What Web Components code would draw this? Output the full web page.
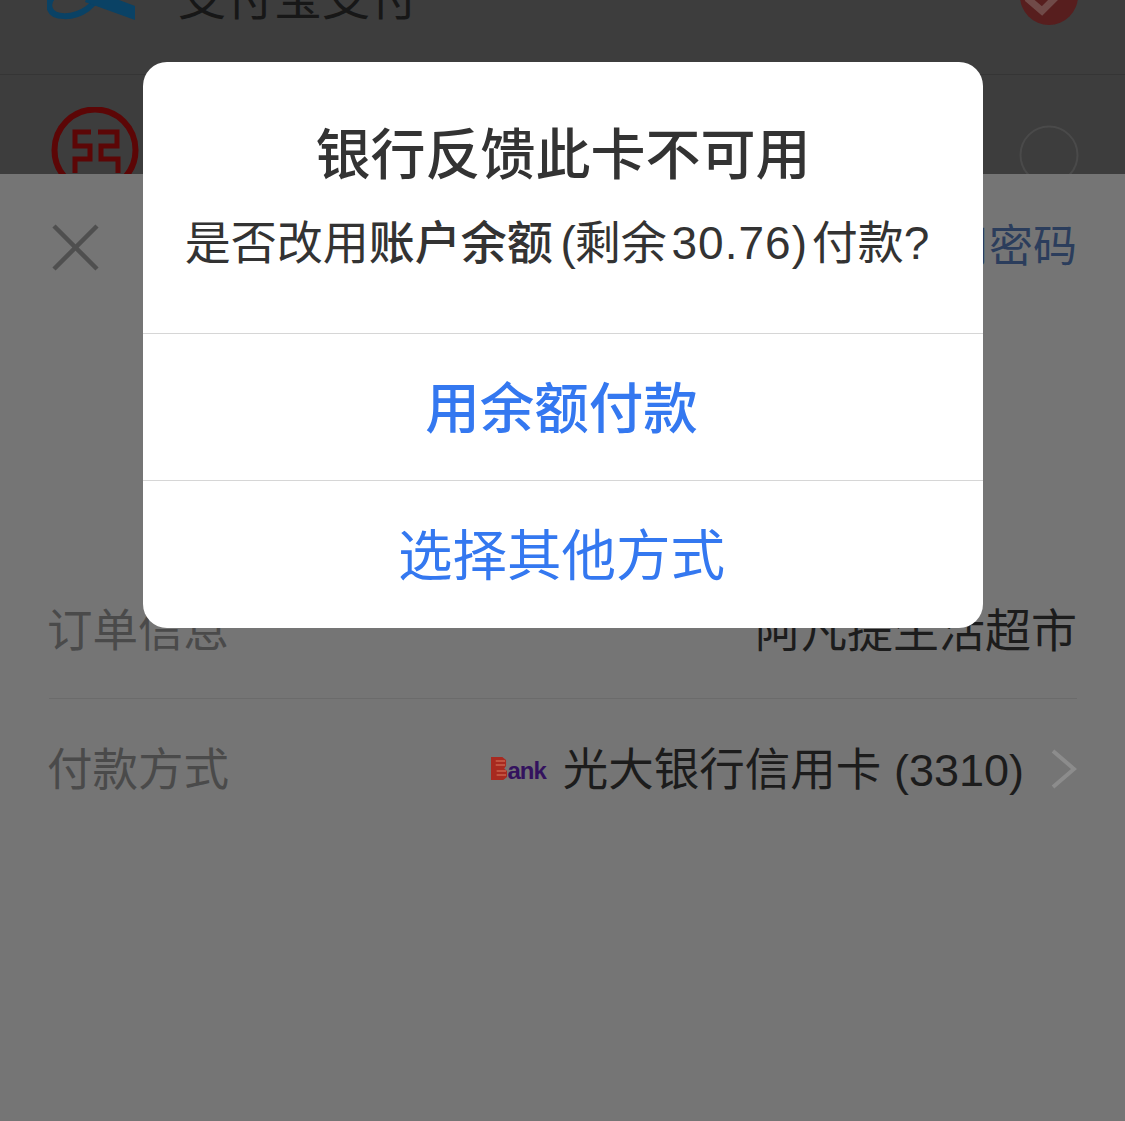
<!DOCTYPE html>
<html lang="zh">
<head>
<meta charset="utf-8">
<title>支付</title>
<style>
  html, body { margin: 0; padding: 0; background: #757575; }
  body { font-family: "Liberation Sans", "Noto Sans CJK SC", sans-serif; }
  b { font-weight: 500; }
  .num { letter-spacing: 1px; }
  .paren { margin: 0 -1px 0 3px; }
</style>
</head>
<body>

<pay-page>
  <method-row slot="methods" name="支付宝支付" selected>
    <svg slot="logo" width="90" height="90" viewBox="0 0 90 90">
      <path d="M20 42C6 44 0 52 3 60 6 69 26 70 40 60 48 54 52 48 56 42" fill="none" stroke="#0a4265" stroke-width="6"/>
      <path d="M43 40 88 57V71L38 53Z" fill="#0a4265"/>
    </svg>
  </method-row>
  <method-row slot="methods" name="工商银行储蓄卡">
    <svg slot="logo" width="96" height="96" viewBox="0 0 96 96">
      <circle cx="48" cy="43" r="40.5" fill="none" stroke="#5c0606" stroke-width="6"/>
      <path d="M44 25H28V39H43V52H28V66M51 25H70V39H54V52H71V66" fill="none" stroke="#5c0606" stroke-width="5"/>
    </svg>
  </method-row>

  <info-row label="订单信息" value="阿凡提生活超市"></info-row>
  <info-row label="付款方式" value='光大银行信用卡 <span class="n">(3310)</span>' chevron last>
    <bank-mark slot="icon"></bank-mark>
  </info-row>

  <alert-dialog slot="dialog">
    <span slot="title">银行反馈此卡不可用</span>
    <span slot="message">是否改用<b>账户余额</b> <span class="paren">(</span>剩余 <span class="num">30.76</span>) 付款?</span>
    <alert-action slot="actions" strong>用余额付款</alert-action>
    <alert-action slot="actions">选择其他方式</alert-action>
  </alert-dialog>
</pay-page>

<script>
class PayPage extends HTMLElement {
  constructor() {
    super();
    this.attachShadow({mode: 'open'}).innerHTML = `
      <style>
        :host {
          display: block;
          position: relative;
          height: 1121px;
          overflow: hidden;
          background: #757575;
        }
        #methods {
          height: 174px;
          overflow: hidden;
          background: #3d3d3d;
        }
        #methods-inner { margin-top: -86px; }
        #sheet { padding: 0 48px 0 49px; }
        #head {
          display: flex;
          justify-content: space-between;
          align-items: center;
          height: 146px;
          padding-left: 3px;
        }
        #use-password { font-size: 44px; color: #2b3d5c; padding-bottom: 8px; }
        #rows { margin-top: 240px; }
        #dialog-slot {
          position: absolute;
          left: 143px;
          top: 62px;
        }
      </style>
      <div id="methods">
        <div id="methods-inner"><slot name="methods"></slot></div>
      </div>
      <div id="sheet">
        <div id="head">
          <svg width="47" height="47" viewBox="0 0 47 47">
            <path d="M2 2 45 45M45 2 2 45" stroke="#4f4f4f" stroke-width="4.5" fill="none"/>
          </svg>
          <span id="use-password">使用密码</span>
        </div>
        <div id="rows"><slot></slot></div>
      </div>
      <div id="dialog-slot"><slot name="dialog"></slot></div>
    `;
  }
}

class MethodRow extends HTMLElement {
  constructor() {
    super();
    const tick = this.hasAttribute('selected')
      ? `<svg id="tick" width="60" height="60" viewBox="0 0 60 60">
           <circle cx="30" cy="30" r="29" fill="#571e1e"/>
           <path d="M8 32 23 45 48 20" fill="none" stroke="#704a48" stroke-width="7"/>
         </svg>`
      : `<svg width="60" height="60" viewBox="0 0 60 60">
           <circle cx="30" cy="30" r="28.5" fill="none" stroke="#4a4a4a" stroke-width="2"/>
         </svg>`;
    this.attachShadow({mode: 'open'}).innerHTML = `
      <style>
        :host {
          display: flex;
          align-items: center;
          height: 160px;
          padding: 0 46px 0 47px;
          border-bottom: 1px solid #353535;
        }
        #logo { width: 131px; flex: none; display: flex; align-items: center; }
        #name { flex: 1; font-size: 48px; color: #171717; }
        #tick { margin-top: 4px; }
      </style>
      <div id="logo"><slot name="logo"></slot></div>
      <div id="name">${this.getAttribute('name')}</div>
      ${tick}
    `;
  }
}

class InfoRow extends HTMLElement {
  constructor() {
    super();
    const chevron = this.hasAttribute('chevron')
      ? `<svg id="chev" width="26" height="40" viewBox="0 0 26 40">
           <path d="M2 2 23 20 2 38" fill="none" stroke="#8c8c8c" stroke-width="4"/>
         </svg>`
      : '';
    this.attachShadow({mode: 'open'}).innerHTML = `
      <style>
        :host {
          display: flex;
          align-items: center;
          height: 138px;
          font-size: 46px;
          border-bottom: 1px solid #6b6b6b;
        }
        :host([last]) { border-bottom: 0; }
        #label { color: #4a4a4a; flex: 1; margin-left: -2px; margin-top: -4px; font-size: 45.5px; }
        #value { color: #1c1c1c; white-space: nowrap; margin-top: -4px; }
        :host([last]) #value { font-size: 45.5px; }
        .n { font-size: 45px; }
        #chev { margin-left: 27px; margin-top: 2px; }
        ::slotted(bank-mark) { margin-right: 17px; }
      </style>
      <div id="label">${this.getAttribute('label')}</div>
      <slot name="icon"></slot>
      <div id="value">${this.getAttribute('value')}</div>
      ${chevron}
    `;
  }
}

class BankMark extends HTMLElement {
  constructor() {
    super();
    this.attachShadow({mode: 'open'}).innerHTML = `
      <style>
        :host {
          display: inline-flex;
          align-items: flex-end;
          font-size: 24px;
          font-weight: 700;
          letter-spacing: -1px;
          color: #33125e;
          line-height: 18px;
        }
        svg { flex: none; }
      </style>
      <svg width="16" height="23" viewBox="0 0 17 23" preserveAspectRatio="none" aria-hidden="true">
        <path d="M0 0H12L16 3V9L14 11.5 17 14V20L13 23H0Z" fill="#a82a20"/>
        <path d="M5 4H15M5 8H15M6 14H16M6 18H16" stroke="#c9604a" stroke-width="1.5"/>
      </svg>
      <span>ank</span>
    `;
  }
}

class AlertDialog extends HTMLElement {
  constructor() {
    super();
    this.attachShadow({mode: 'open'}).innerHTML = `
      <style>
        :host {
          display: block;
          width: 840px;
          height: 566px;
          background: #fff;
          border-radius: 24px;
          overflow: hidden;
        }
        #top {
          height: 271px;
          box-sizing: border-box;
          padding-top: 60px;
          display: flex;
          flex-direction: column;
          align-items: center;
          color: #333;
        }
        #title { font-size: 55px; font-weight: 500; line-height: 66px; }
        #message {
          font-size: 46px;
          line-height: 56px;
          margin-top: 27px;
          padding-right: 12px;
          word-spacing: -8px;
          white-space: nowrap;
        }
        ::slotted(span) { font-family: "Liberation Sans", "Noto Sans CJK SC", sans-serif; }
      </style>
      <div id="top">
        <div id="title"><slot name="title"></slot></div>
        <div id="message"><slot name="message"></slot></div>
      </div>
      <slot name="actions"></slot>
    `;
  }
}

class AlertAction extends HTMLElement {
  constructor() {
    super();
    this.attachShadow({mode: 'open'}).innerHTML = `
      <style>
        :host {
          display: flex;
          align-items: center;
          justify-content: center;
          height: 147px;
          box-sizing: border-box;
          border-top: 1px solid #d6d6d6;
          padding: 0 3px 6px 0;
          font-size: 54.5px;
          color: #3478f0;
          font-family: "Noto Sans CJK SC", sans-serif;
        }
        :host([strong]) { font-weight: 500; }
      </style>
      <slot></slot>
    `;
  }
}

customElements.define('pay-page', PayPage);
customElements.define('method-row', MethodRow);
customElements.define('info-row', InfoRow);
customElements.define('bank-mark', BankMark);
customElements.define('alert-dialog', AlertDialog);
customElements.define('alert-action', AlertAction);
</script>
</body>
</html>
